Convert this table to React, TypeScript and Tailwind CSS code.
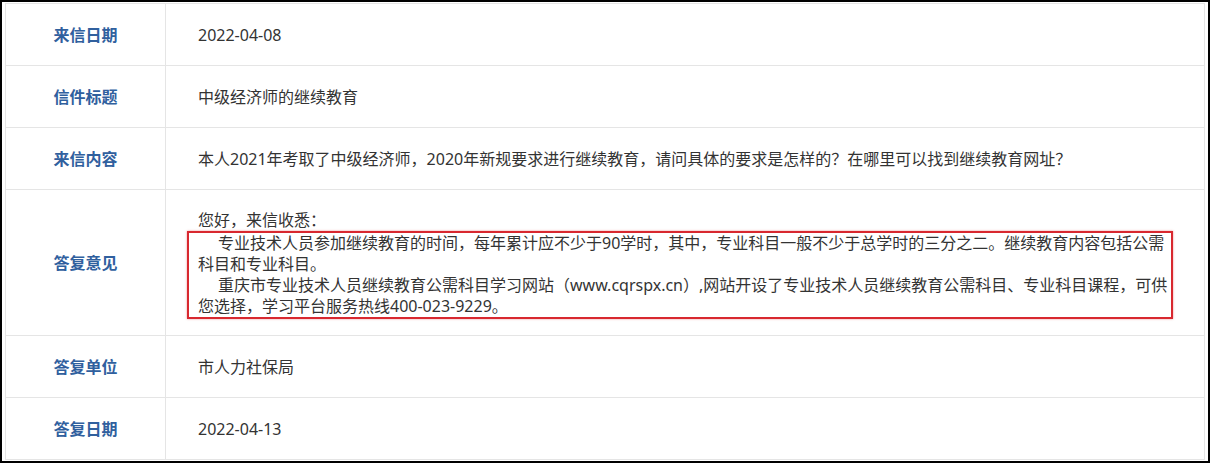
import React from 'react';

const FONT = { fontFamily: '"Noto Sans", "Noto Sans CJK SC", sans-serif' };

const rows: { label: string; value: string }[] = [
  { label: '来信日期', value: '2022-04-08' },
  { label: '信件标题', value: '中级经济师的继续教育' },
  {
    label: '来信内容',
    value:
      '本人2021年考取了中级经济师，2020年新规要求进行继续教育，请问具体的要求是怎样的？在哪里可以找到继续教育网址？',
  },
];

const tail: { label: string; value: string }[] = [
  { label: '答复单位', value: '市人力社保局' },
  { label: '答复日期', value: '2022-04-13' },
];

const Row = ({ label, children, tall }: { label: string; children: React.ReactNode; tall?: boolean }) => (
  <div className={`flex border-t border-[#e5e5e5] ${tall ? 'h-[146px]' : 'h-[62px]'}`}>
    <div className="w-[160px] shrink-0 border-r border-[#e5e5e5] flex items-center justify-center">
      <span className="text-[16px] font-bold text-[#30609e]">{label}</span>
    </div>
    <div className="flex-1 pl-8 pr-7 flex items-center text-[16px] text-[#333]">{children}</div>
  </div>
);

export default function App() {
  return (
    <div className="w-[1210px] h-[463px] border-2 border-black bg-white pl-[3px] pt-[1px]" style={FONT}>
      <div className="w-[1200px] border-x border-b border-[#e5e5e5]">
        {rows.map((r) => (
          <Row key={r.label} label={r.label}>
            {r.value}
          </Row>
        ))}

        <Row label="答复意见" tall>
          <div className="w-full leading-[21px] pt-[4px]">
            <div>您好，来信收悉：</div>
            <div className="-ml-[11px] mr-[3px] pl-[9px] border-2 border-[#d8282f] shadow-[0_0_2px_rgba(216,40,47,0.5)]">
              <div className="indent-5">
                专业技术人员参加继续教育的时间，每年累计应不少于90学时，其中，专业科目一般不少于总学时的三分之二。继续教育内容包括公需
              </div>
              <div>科目和专业科目。</div>
              <div className="indent-5">
                重庆市专业技术人员继续教育公需科目学习网站（www.cqrspx.cn）,网站开设了专业技术人员继续教育公需科目、专业科目课程，可供
              </div>
              <div>您选择，学习平台服务热线400-023-9229。</div>
            </div>
          </div>
        </Row>

        {tail.map((r) => (
          <Row key={r.label} label={r.label}>
            {r.value}
          </Row>
        ))}
      </div>
    </div>
  );
}
